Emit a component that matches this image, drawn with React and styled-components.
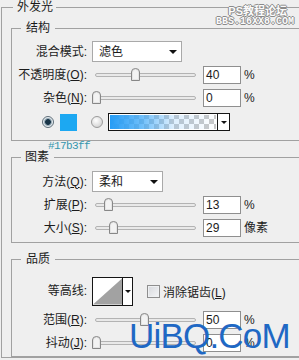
import React from "react";
import styled, { createGlobalStyle } from "styled-components";

const GlobalStyle = createGlobalStyle`
  html, body {
    margin: 0;
    padding: 0;
    background: #efefef;
  }
  body {
    font-family: "Liberation Sans", "Noto Sans CJK SC", sans-serif;
    font-size: 12px;
    color: #1b1b1b;
  }
`;

const Page = styled.div`
  position: relative;
  width: 299px;
  height: 360px;
  overflow: hidden;
  background: #efefef;
`;

const Group = styled.fieldset`
  margin: 0 0 0 ${(p) => (p.$outer ? 1 : 0)}px;
  padding: ${(p) => p.$pad};
  width: ${(p) => (p.$outer ? "330px" : "auto")};
  min-width: 0;
  box-sizing: border-box;
  border: 1px solid #a1a1a1;
  & + & {
    margin-top: 9px;
  }
`;

const Legend = styled.legend`
  margin-left: ${(p) => p.$ml}px;
  padding: 0 ${(p) => p.$pr}px 0 ${(p) => p.$pl}px;
  line-height: 14px;
  font-size: 12px;
`;

const Row = styled.div`
  display: flex;
  align-items: center;
  height: ${(p) => p.$h || 23}px;
  padding-left: ${(p) => p.$indent || 0}px;
`;

const Label = styled.span`
  flex: none;
  width: 75px;
  margin-right: 5px;
  text-align: right;
  white-space: nowrap;
  line-height: 14px;
`;

const Select = styled.div`
  width: ${(p) => p.$w}px;
  height: 21px;
  box-sizing: border-box;
  border: 1px solid #a9a9a9;
  background: #fff;
  display: flex;
  align-items: center;
  justify-content: space-between;
  padding: 0 4px 0 6px;
  line-height: 14px;
`;

const Caret = styled.span`
  width: 0;
  height: 0;
  border-left: ${(p) => p.$s || 4}px solid transparent;
  border-right: ${(p) => p.$s || 4}px solid transparent;
  border-top: ${(p) => p.$s || 4}px solid #111;
`;

const Slider = styled.div`
  position: relative;
  width: 107px;
  height: 100%;
  display: flex;
  align-items: center;
`;

const Track = styled.div`
  flex: 1;
  margin: 1px 3px 0;
  height: 4px;
  box-sizing: border-box;
  border: 1px solid #b3b3b3;
  border-radius: 2px;
  background: #e9e9e9;
`;

const ThumbWrap = styled.svg`
  position: absolute;
  top: 5px;
`;

const NumBox = styled.div`
  width: 38px;
  height: 18px;
  box-sizing: border-box;
  margin-left: 4px;
  border: 1px solid #8f8f8f;
  background: #fff;
  padding-left: 2px;
  line-height: 16px;
`;

const Unit = styled.span`
  margin-left: 3px;
  line-height: 14px;
`;

const Radio = styled.span`
  width: 12px;
  height: 12px;
  box-sizing: border-box;
  border-radius: 50%;
  border: 1px solid ${(p) => (p.$on ? "#5e6d78" : "#9b9b9b")};
  background: ${(p) =>
    p.$on
      ? "radial-gradient(circle, #173447 0 2.5px, #6f8796 3px, #e7eef2 4.5px)"
      : "radial-gradient(circle at 40% 35%, #ffffff 0, #dedede 60%, #c4c4c4 100%)"};
`;

const Swatch = styled.span`
  width: 17px;
  height: 17px;
  margin: 0 14px 0 6px;
  background: ${(p) => p.$color};
`;

const GradientBox = styled.div`
  margin-left: 5px;
  width: 122px;
  height: 18px;
  box-sizing: border-box;
  border: 1px solid #151515;
  display: flex;
`;

const GradientFill = styled.div`
  flex: 1;
  box-shadow: inset 0 0 0 1px #fff;
  background: linear-gradient(
      to right,
      rgba(36, 156, 246, 1) 0%,
      rgba(60, 168, 248, 0.75) 30%,
      rgba(120, 190, 250, 0.25) 60%,
      rgba(255, 255, 255, 0) 100%
    ),
    repeating-conic-gradient(#c9c9c9 0 25%, #ffffff 0 50%) 0 0 / 10px 10px;
`;

const BoxArrow = styled.div`
  width: ${(p) => p.$w}px;
  flex: none;
  border-left: 1px solid #151515;
  background: #fff;
  display: flex;
  align-items: center;
  justify-content: center;
`;

const Note = styled.div`
  height: 9px;
  margin-left: 37px;
  font-family: "Liberation Mono", monospace;
  font-size: 11px;
  line-height: 10px;
  letter-spacing: -0.6px;
  color: #3496ae;
`;

const ContourBox = styled.div`
  width: 41px;
  height: 29px;
  box-sizing: border-box;
  border: 1px solid #151515;
  background: #fff;
  display: flex;
`;

const Check = styled.span`
  width: 13px;
  height: 13px;
  box-sizing: border-box;
  margin: 0 3px 0 14px;
  border: 1px solid #8e8e8e;
  background: linear-gradient(135deg, #d6d8dc, #f4f5f7);
  box-shadow: inset 0 0 0 1px #eef0f2;
`;

const TopMark = styled.div`
  position: absolute;
  top: 5px;
  right: 5px;
  display: flex;
  flex-direction: column;
  align-items: flex-end;
  color: #fbfbfb;
  font-weight: bold;
  text-shadow: 1px 0 #8a8a8a, -1px 0 #8a8a8a, 0 1px #8a8a8a, 0 -1px #8a8a8a;
`;

const MarkLine = styled.span`
  font-family: ${(p) => (p.$mono ? '"Liberation Mono", monospace' : '"Liberation Sans", "Noto Sans CJK SC", sans-serif')};
  font-size: ${(p) => p.$size}px;
  line-height: ${(p) => p.$lh}px;
  padding-right: ${(p) => p.$pr || 0}px;
  letter-spacing: ${(p) => p.$ls || 0}px;
`;

const BigMark = styled.div`
  position: absolute;
  left: 129px;
  top: 318px;
  font-family: "Liberation Sans", sans-serif;
  font-size: 35px;
  line-height: 35px;
  letter-spacing: -0.8px;
  color: #1f68c4;
  white-space: nowrap;
`;

const Thumb = ({ at }) => (
  <ThumbWrap width="9" height="13" viewBox="0 0 9 13" style={{ left: at - 4.5 }}>
    <path d="M0.5 4 Q0.5 0.5 4.5 0.5 Q8.5 0.5 8.5 4 L8.5 12.5 L0.5 12.5 Z" fill="#e4e4e4" stroke="#878787" />
    <path d="M2 4 Q2 2 4.5 2 Q7 2 7 4 L7 11 L2 11 Z" fill="#f3f3f3" />
  </ThumbWrap>
);

const SliderRow = ({ label, at, value, unit }) => (
  <Row>
    <Label>{label}</Label>
    <Slider>
      <Track />
      <Thumb at={at} />
    </Slider>
    <NumBox>{value}</NumBox>
    <Unit>{unit}</Unit>
  </Row>
);

export default function App() {
  return (
    <Page>
      <GlobalStyle />
      <Group $outer $pad="7px 0 0 9px">
        <Legend $ml={2} $pl={4} $pr={3}>外发光</Legend>

        <Group $pad="5px 0 5px 0">
          <Legend $ml={9} $pl={5} $pr={5}>结构</Legend>
          <Row>
            <Label>混合模式:</Label>
            <Select $w={90}>
              <span>滤色</span>
              <Caret />
            </Select>
          </Row>
          <SliderRow label={<>不透明度(<u>O</u>):</>} at={43} value="40" unit="%" />
          <SliderRow label={<>杂色(<u>N</u>):</>} at={4} value="0" unit="%" />
          <Row $h={26} $indent={30}>
            <Radio $on />
            <Swatch $color="#1ca8f2" />
            <Radio />
            <GradientBox>
              <GradientFill />
              <BoxArrow $w={11}>
                <Caret $s={3} />
              </BoxArrow>
            </GradientBox>
          </Row>
        </Group>
        <Note>#17b3ff</Note>

        <Group $pad="6px 0 3px 0">
          <Legend $ml={9} $pl={4} $pr={5}>图素</Legend>
          <Row>
            <Label>方法(<u>Q</u>):</Label>
            <Select $w={71}>
              <span>柔和</span>
              <Caret />
            </Select>
          </Row>
          <SliderRow label={<>扩展(<u>P</u>):</>} at={16} value="13" unit="%" />
          <SliderRow label={<>大小(<u>S</u>):</>} at={21} value="29" unit="像素" />
        </Group>

        <Group $pad="8px 0 2px 0">
          <Legend $ml={9} $pl={5} $pr={5}>品质</Legend>
          <Row $h={34}>
            <Label>等高线:</Label>
            <ContourBox>
              <svg width="30" height="27" viewBox="0 0 30 27">
                <polygon points="0,27 30,0 30,27" fill="#a2a2a2" />
              </svg>
              <BoxArrow $w={9}>
                <Caret $s={3} />
              </BoxArrow>
            </ContourBox>
            <Check />
            <span>消除锯齿(<u>L</u>)</span>
          </Row>
          <SliderRow label={<>范围(<u>R</u>):</>} at={52} value="50" unit="%" />
          <SliderRow label={<>抖动(<u>J</u>):</>} at={4} value="0" unit="%" />
        </Group>
      </Group>

      <TopMark>
        <MarkLine $size={11} $lh={12} $pr={7}>PS教程论坛</MarkLine>
        <MarkLine $mono $size={10} $lh={10} $ls={0}>BBS.16XX8.COM</MarkLine>
      </TopMark>
      <BigMark>UiBQ.CoM</BigMark>
    </Page>
  );
}
